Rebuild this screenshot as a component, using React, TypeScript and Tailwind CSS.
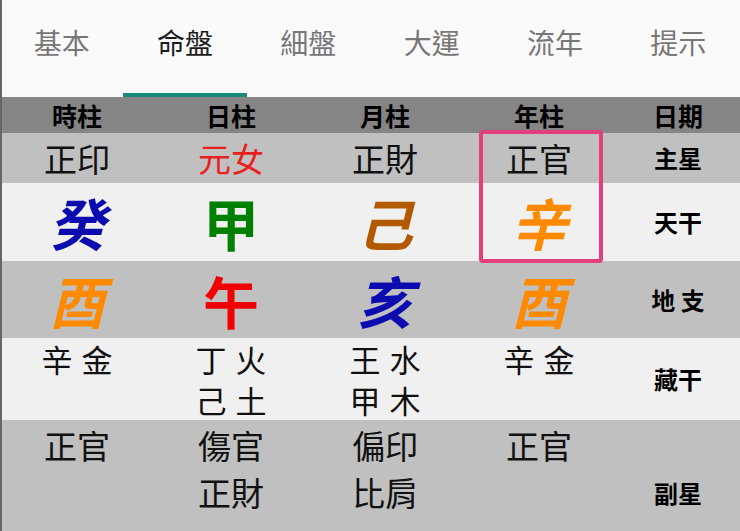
import React from 'react';

const tabs = ['基本', '命盤', '細盤', '大運', '流年', '提示'];
const cols = 'grid grid-cols-[154px_154px_154px_154px_1fr]';

type Big = { ch: string; color: string; italic?: boolean };

const stems: Big[] = [
  { ch: '癸', color: 'text-[#0b0bb0]', italic: true },
  { ch: '甲', color: 'text-[#008000]' },
  { ch: '己', color: 'text-[#b35a00]', italic: true },
  { ch: '辛', color: 'text-[#ff8a00]', italic: true },
];

const branches: Big[] = [
  { ch: '酉', color: 'text-[#ff8a00]', italic: true },
  { ch: '午', color: 'text-[#f00000]' },
  { ch: '亥', color: 'text-[#0b0bb0]', italic: true },
  { ch: '酉', color: 'text-[#ff8a00]', italic: true },
];

const hidden = [['辛 金'], ['丁 火', '己 土'], ['王 水', '甲 木'], ['辛 金']];
const minor = [['正官'], ['傷官', '正財'], ['偏印', '比肩'], ['正官']];

function Label({ children }: { children: React.ReactNode }) {
  return (
    <div className="flex items-center justify-center text-[24px] leading-none font-bold text-black">
      {children}
    </div>
  );
}

export default function App() {
  return (
    <div
      className="relative w-[740px] h-[531px] overflow-hidden bg-[#fafafa]"
      style={{ fontFamily: '"Noto Sans CJK TC", "Noto Sans CJK SC", sans-serif' }}
    >
      {/* Tabs */}
      <div className="flex h-[97px] bg-[#fafafa]">
        {tabs.map((t, i) => (
          <div key={t} className="relative flex-1 flex items-start justify-center pt-[22px]">
            <span className={`text-[28px] leading-[40px] ${i === 1 ? 'text-[#1c1c1c]' : 'text-[#777]'}`}>
              {t}
            </span>
            {i === 1 && <div className="absolute left-0 right-0 bottom-0 h-[4px] bg-[#178a7c]" />}
          </div>
        ))}
      </div>

      {/* Table */}
      <div className="relative">
        <div className={`${cols} h-[36px] bg-[#858585]`}>
          {['時柱', '日柱', '月柱', '年柱', '日期'].map((h) => (
            <div key={h} className="flex items-center justify-center text-[25px] leading-none font-bold text-black">
              {h}
            </div>
          ))}
        </div>

        <div className={`${cols} h-[50px] bg-[#c0c0c0]`}>
          {['正印', '元女', '正財', '正官'].map((s, i) => (
            <div
              key={i}
              className={`flex items-center justify-center text-[33px] leading-none ${i === 1 ? 'text-[#e8201e]' : 'text-[#111]'}`}
            >
              {s}
            </div>
          ))}
          <Label>主星</Label>
        </div>

        <div className={`${cols} h-[78px] bg-[#f0f0f0]`}>
          {stems.map((s, i) => (
            <div key={i} className={`flex items-center justify-center text-[56px] leading-none font-bold ${s.color} ${s.italic ? 'italic' : ''}`}>
              {s.ch}
            </div>
          ))}
          <Label>天干</Label>
        </div>

        <div className={`${cols} h-[77px] bg-[#c0c0c0]`}>
          {branches.map((s, i) => (
            <div key={i} className={`flex items-center justify-center text-[56px] leading-none font-bold ${s.color} ${s.italic ? 'italic' : ''}`}>
              {s.ch}
            </div>
          ))}
          <Label>地 支</Label>
        </div>

        <div className={`${cols} h-[82px] bg-[#f0f0f0]`}>
          {hidden.map((lines, i) => (
            <div key={i} className="flex flex-col items-center text-[31px] leading-[41px] text-[#111] [word-spacing:2px]">
              {lines.map((l) => (
                <span key={l}>{l}</span>
              ))}
            </div>
          ))}
          <Label>藏干</Label>
        </div>

        <div className={`${cols} h-[146px] bg-[#c0c0c0]`}>
          {minor.map((lines, i) => (
            <div key={i} className="flex flex-col items-center pt-[2px] text-[33px] leading-[47px] text-[#111]">
              {lines.map((l) => (
                <span key={l}>{l}</span>
              ))}
            </div>
          ))}
          <Label>副星</Label>
        </div>

        {/* highlight around 年柱 */}
        <div className="absolute left-[479px] top-[33px] w-[124px] h-[133px] rounded-[4px] border-[4px] border-[#e23f7c] pointer-events-none" />
      </div>

      {/* left edge line */}
      <div className="absolute left-0 top-0 bottom-0 w-[2px] bg-[#666]" />
    </div>
  );
}
